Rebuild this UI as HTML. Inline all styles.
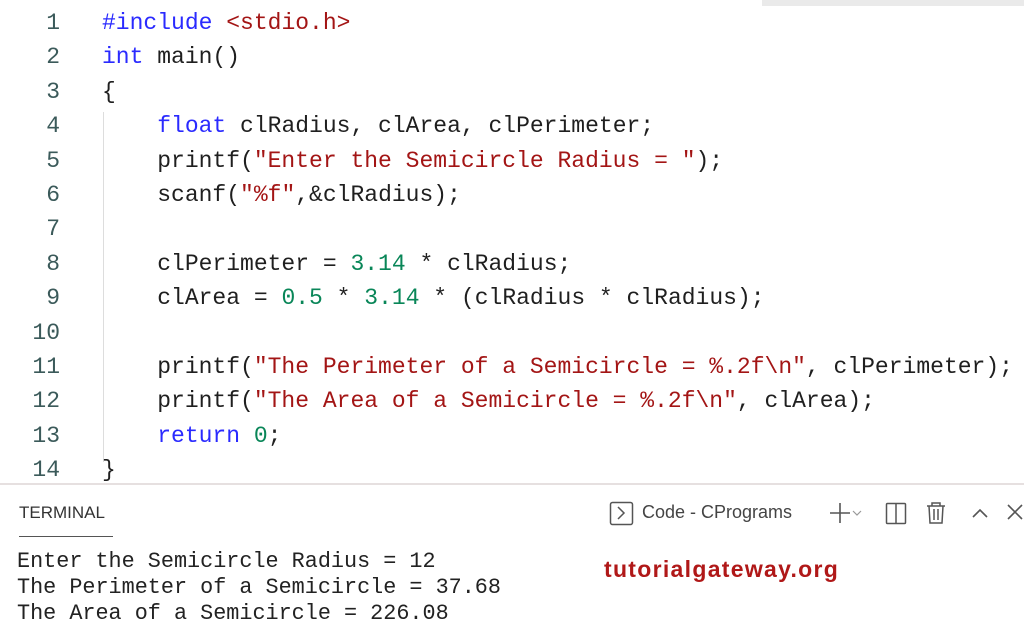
<!DOCTYPE html>
<html><head><style>
body{margin:0;width:1024px;height:628px;background:#fff;overflow:hidden;position:relative;font-family:"Liberation Mono",monospace}
.ln{position:absolute;left:0;width:60px;text-align:right;font-size:23px;color:#3b5a5a}
.cd{position:absolute;left:102px;font-size:23px;color:#1f1f1f;white-space:pre}
.k{color:#2a2aff}.s{color:#a31515}.n{color:#098658}.p{color:#2a2aff}
.t{position:absolute;left:17px;font-size:21.8px;color:#222;white-space:pre}
</style></head><body>
<div style="position:absolute;left:762px;top:0;width:262px;height:6px;background:#eaeaea"></div>
<div style="position:absolute;left:103px;top:112px;width:1px;height:350px;background:#ddd"></div>
<div id="code"></div>
<script>
var L=[
'<span class="p">#include</span> <span class="s">&lt;stdio.h&gt;</span>',
'<span class="k">int</span> main()',
'{',
'    <span class="k">float</span> clRadius, clArea, clPerimeter;',
'    printf(<span class="s">"Enter the Semicircle Radius = "</span>);',
'    scanf(<span class="s">"%f"</span>,&amp;clRadius);',
'',
'    clPerimeter = <span class="n">3.14</span> * clRadius;',
'    clArea = <span class="n">0.5</span> * <span class="n">3.14</span> * (clRadius * clRadius);',
'',
'    printf(<span class="s">"The Perimeter of a Semicircle = %.2f\\n"</span>, clPerimeter);',
'    printf(<span class="s">"The Area of a Semicircle = %.2f\\n"</span>, clArea);',
'    <span class="k">return</span> <span class="n">0</span>;',
'}'];
var h='';for(var i=0;i<L.length;i++){var y=10+i*34.4;h+='<div class="ln" style="top:'+y+'px">'+(i+1)+'</div><div class="cd" style="top:'+y+'px">'+L[i]+'</div>';}
document.getElementById('code').innerHTML=h;
</script>
<div style="position:absolute;left:0;top:483px;width:1024px;height:2px;background:#e6e0e0"></div>
<div style="position:absolute;left:19px;top:503px;font-family:'Liberation Sans',sans-serif;font-size:17px;color:#333">TERMINAL</div>
<div style="position:absolute;left:19px;top:536px;width:94px;height:1px;background:#555"></div>
<svg style="position:absolute;left:600px;top:495px" width="424" height="40">
<rect x="10.5" y="7.5" width="22" height="22" rx="2" fill="none" stroke="#555" stroke-width="1.5"/>
<path d="M18 12l6 6-6 6" fill="none" stroke="#555" stroke-width="1.5"/>
<path d="M230 18h20M240 8v20" stroke="#555" stroke-width="1.6"/>
<path d="M253 16l4 4 4-4" fill="none" stroke="#999" stroke-width="1.2"/>
<rect x="286.5" y="8.5" width="19" height="20" rx="1" fill="none" stroke="#555" stroke-width="1.5"/>
<path d="M296 9v19" stroke="#555" stroke-width="1.5"/>
<path d="M327 11h18M332 11v-3h8v3M329 11l1 17h12l1-17M334 14v11M338 14v11" fill="none" stroke="#555" stroke-width="1.5"/>
<path d="M373 22l7-7 7 7" fill="none" stroke="#555" stroke-width="1.6"/>
<path d="M408 10l14 14M422 10l-14 14" stroke="#555" stroke-width="1.6"/>
</svg>
<div style="position:absolute;left:642px;top:502px;font-family:'Liberation Sans',sans-serif;font-size:18px;color:#444">Code - CPrograms</div>
<div class="t" style="top:549px">Enter the Semicircle Radius = 12</div>
<div class="t" style="top:575px">The Perimeter of a Semicircle = 37.68</div>
<div class="t" style="top:601px">The Area of a Semicircle = 226.08</div>
<div style="position:absolute;left:604px;top:556px;font-family:'Liberation Sans',sans-serif;font-weight:bold;font-size:23px;color:#b01818;letter-spacing:1.3px">tutorialgateway.org</div>
</body></html>
